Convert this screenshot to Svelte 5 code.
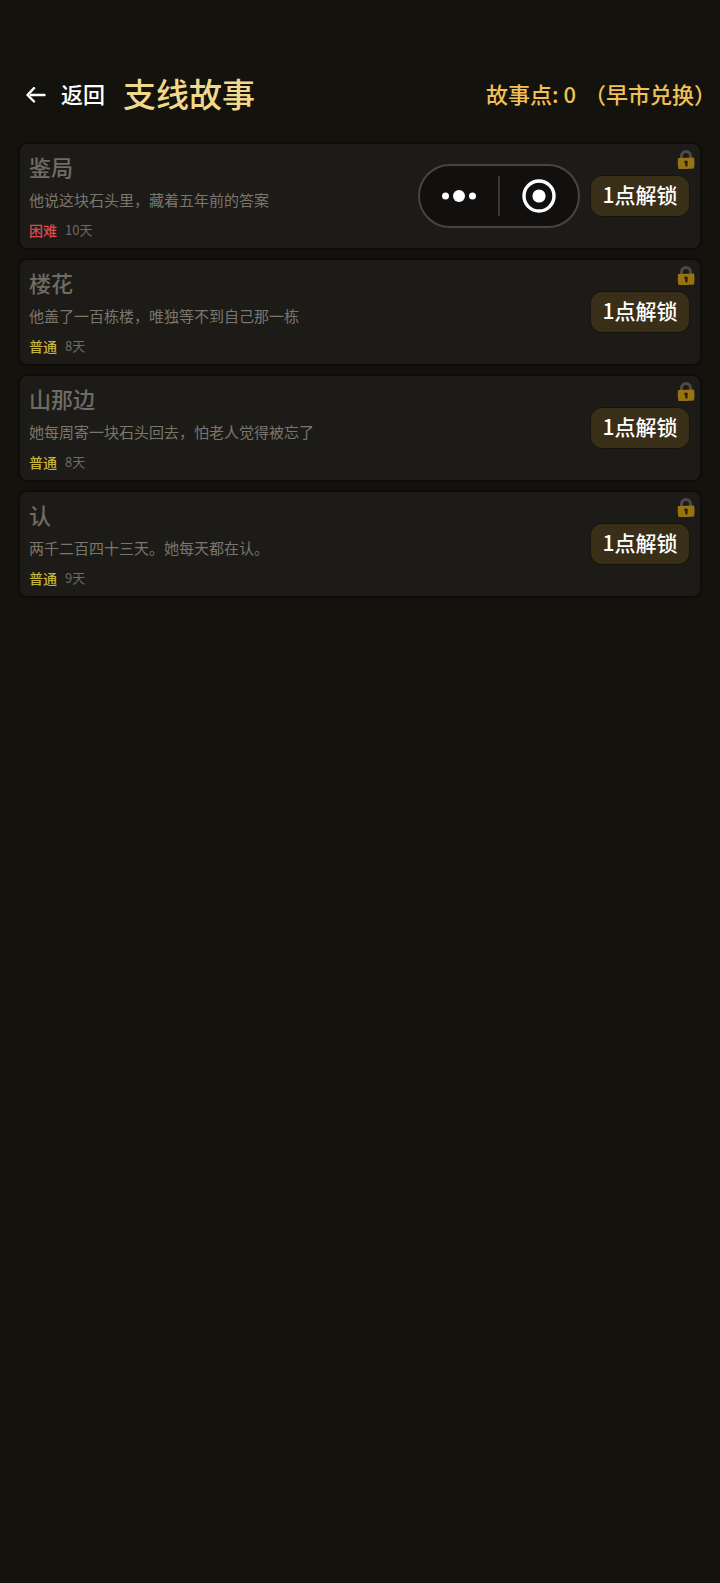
<script lang="ts">
  interface Story {
    title: string;
    desc: string;
    level: string;
    hard: boolean;
    days: number;
    cost: number;
  }

  let points = $state(0);

  const stories: Story[] = [
    { title: '鉴局', desc: '他说这块石头里，藏着五年前的答案', level: '困难', hard: true, days: 10, cost: 1 },
    { title: '楼花', desc: '他盖了一百栋楼，唯独等不到自己那一栋', level: '普通', hard: false, days: 8, cost: 1 },
    { title: '山那边', desc: '她每周寄一块石头回去，怕老人觉得被忘了', level: '普通', hard: false, days: 8, cost: 1 },
    { title: '认', desc: '两千二百四十三天。她每天都在认。', level: '普通', hard: false, days: 9, cost: 1 }
  ];
</script>

<div class="page">
  <header class="header">
    <button class="back">
      <svg width="20" height="18" viewBox="0 0 20 18" aria-hidden="true">
        <path d="M18.5 9H5M8 2.200L1.500 9L8 15.500" />
      </svg>
      <span>返回</span>
    </button>
    <h1>支线故事</h1>
    <div class="points">
      <span>故事点: {points}</span>
      <span>（早市兑换）</span>
    </div>
  </header>

  <main class="list">
    {#each stories as story}
      <article class="card">
        <div class="info">
          <h2>{story.title}</h2>
          <p class="desc">{story.desc}</p>
          <div class="meta">
            <span class="level" class:hard={story.hard}>{story.level}</span>
            <span class="days">{story.days}天</span>
          </div>
        </div>
        <button class="unlock">{story.cost}点解锁</button>
        <svg class="lock" width="18" height="20" viewBox="0 0 18 20" aria-hidden="true">
          <path class="shackle" d="M4.500 8.500V6a4.300 4.300 0 0 1 9 0V8" />
          <path class="body" d="M1 8Q9 7.500 17 7.500Q18 13 17 18.500Q9 19 1.500 19Q0.200 14 1 8Z" />
          <path class="hole" d="M7 11.500Q9 9.500 11 11.500L10.500 13.500V16.500H8.500L8 13.500Z" />
        </svg>
      </article>
    {/each}
  </main>

  <div class="capsule">
    <button aria-label="更多">
      <svg width="36" height="36" viewBox="0 0 36 36">
        <circle cx="4.500" cy="18" r="3.500" />
        <circle cx="18" cy="18" r="6" />
        <circle cx="31.500" cy="18" r="3.500" />
      </svg>
    </button>
    <span class="divider"></span>
    <button aria-label="关闭">
      <svg width="36" height="36" viewBox="0 0 36 36">
        <circle class="ring" cx="18" cy="18" r="15" />
        <circle cx="18" cy="18" r="6.600" />
      </svg>
    </button>
  </div>
</div>

<style>
  :global(body) {
    background: #13120d;
  }

  .page {
    position: relative;
    min-height: 100vh;
    box-sizing: border-box;
    padding-top: 72px;
    font-family: 'Noto Sans CJK SC', sans-serif;
    color: #fff;
  }

  button {
    border: none;
    padding: 0;
    background: none;
    color: inherit;
    font: inherit;
    cursor: pointer;
  }

  h1,
  h2,
  p {
    margin: 0;
  }

  .header {
    display: flex;
    align-items: center;
    height: 46px;
    padding-left: 26px;
  }

  .back {
    display: flex;
    align-items: center;
    gap: 15px;
    font-size: 22px;
    font-weight: 500;
    line-height: 32px;
  }

  .back span,
  h1,
  .points {
    padding-bottom: 4px;
  }

  .back svg {
    fill: none;
    stroke: #fff;
    stroke-width: 2.4;
    stroke-linecap: round;
    stroke-linejoin: round;
  }

  h1 {
    margin-left: 18px;
    font-size: 33px;
    font-weight: 500;
    line-height: 42px;
    color: #f0d98a;
  }

  .points {
    display: flex;
    gap: 8px;
    margin-left: auto;
    margin-right: 4px;
    font-size: 22px;
    font-weight: 500;
    line-height: 32px;
    color: #f2c054;
    white-space: nowrap;
  }

  .list {
    display: flex;
    flex-direction: column;
    gap: 10px;
    padding: 25px 19px;
  }

  .card {
    position: relative;
    display: flex;
    align-items: center;
    justify-content: space-between;
    padding: 7px 10px 7px 9px;
    border: 1px solid #0d0c08;
    border-radius: 8px;
    background: #1d1b17;
    box-shadow: 0 0 3px #0e0d09;
  }

  .info {
    display: flex;
    flex-direction: column;
    gap: 7px;
    color: #6f6b65;
  }

  h2 {
    font-size: 22px;
    font-weight: 500;
    line-height: 30px;
  }

  .desc {
    font-size: 15px;
    line-height: 24px;
    color: #7a766e;
  }

  .meta {
    display: flex;
    gap: 8px;
    font-size: 14px;
    line-height: 22px;
  }

  .level {
    font-weight: 500;
    color: #c6b53c;
  }

  .level.hard {
    color: #dc4a4e;
  }

  .days {
    font-size: 13px;
  }

  .unlock {
    width: 100px;
    height: 42px;
    padding-bottom: 4px;
    border: 1px solid #16130b;
    border-radius: 12px;
    background: #392e18;
    font-size: 21px;
    font-weight: 500;
    line-height: 32px;
  }

  .lock {
    position: absolute;
    top: 6px;
    right: 5px;
  }

  .shackle {
    fill: none;
    stroke: #4b4a48;
    stroke-width: 3;
  }

  .body {
    fill: #977312;
  }

  .hole {
    fill: #2b210b;
  }

  .capsule {
    position: absolute;
    top: 164px;
    right: 140px;
    display: flex;
    align-items: center;
    width: 162px;
    height: 64px;
    box-sizing: border-box;
    border: 2px solid #464544;
    border-radius: 32px;
    background: #11100e;
  }

  .capsule button {
    display: flex;
    flex: 1;
    align-items: center;
    justify-content: center;
    height: 100%;
  }

  .capsule svg {
    fill: #fff;
  }

  .capsule .ring {
    fill: none;
    stroke: #fff;
    stroke-width: 3.4;
  }

  .divider {
    width: 2px;
    height: 40px;
    background: #3a3938;
  }
</style>
